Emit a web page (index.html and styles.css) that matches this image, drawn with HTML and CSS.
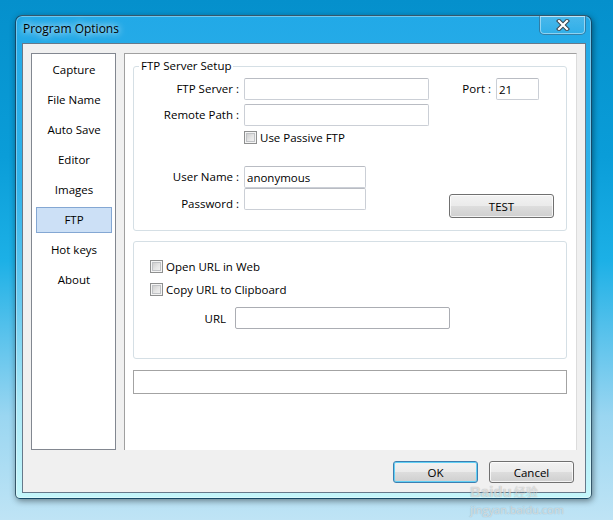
FILE: index.html
```html
<!DOCTYPE html>
<html>
<head>
<meta charset="utf-8">
<title>Program Options</title>
<link rel="stylesheet" href="styles.css">
</head>
<body>
<div class="desktop">
  <div class="window">
    <div class="titlebar">
      <span class="title">Program Options</span>
      <button class="close" aria-label="Close">
        <svg width="14" height="12" viewBox="0 0 14 12">
          <path d="M3 2 L11 10 M11 2 L3 10" stroke="#3b4650" stroke-width="4.2" stroke-linecap="square" fill="none"/>
          <path d="M3 2 L11 10 M11 2 L3 10" stroke="#ffffff" stroke-width="2.2" stroke-linecap="square" fill="none"/>
        </svg>
      </button>
    </div>
    <div class="client">
      <div class="main">
        <ul class="nav">
          <li>Capture</li>
          <li>File Name</li>
          <li>Auto Save</li>
          <li>Editor</li>
          <li>Images</li>
          <li class="active">FTP</li>
          <li>Hot keys</li>
          <li>About</li>
        </ul>
        <div class="panel">
          <fieldset class="group">
            <legend>FTP Server Setup</legend>
            <div class="ftp-grid">
              <label class="lbl row1">FTP Server :</label>
              <input class="txt row1 col2" type="text">
              <label class="lbl row1 col3">Port :</label>
              <input class="txt row1 col4" type="text" value="21">
              <label class="lbl row2 bottom">Remote Path :</label>
              <input class="txt row2 col2 bottom" type="text">
              <div class="chk-line row3 wide"><span class="check"></span>Use Passive FTP</div>
              <label class="lbl row5">User Name :</label>
              <input class="txt short row5 col2" type="text" value="anonymous">
              <label class="lbl row6 pw">Password :</label>
              <input class="txt short row6 col2 pw" type="password">
              <button class="btn test">TEST</button>
            </div>
          </fieldset>
          <div class="url-group">
            <div class="chk-line"><span class="check"></span>Open URL in Web</div>
            <div class="chk-line"><span class="check"></span>Copy URL to Clipboard</div>
            <div class="url-row">
              <label class="url-lbl">URL</label>
              <input class="txt url" type="text">
            </div>
          </div>
          <div class="status-box"></div>
        </div>
      </div>
      <div class="buttons">
        <button class="btn default">OK</button>
        <button class="btn">Cancel</button>
      </div>
    </div>
  </div>
  <div class="watermark">
    <div class="wm-brand"><span class="wm-en">Baidu</span><span class="wm-cn">经验</span></div>
    <div class="wm-url">jingyan.baidu.com</div>
  </div>
</div>
</body>
</html>
```
FILE: styles.css
```css
html, body {
  margin: 0;
  padding: 0;
}

body {
  width: 613px;
  height: 520px;
  overflow: hidden;
  font-family: "Open Sans", "Noto Sans", sans-serif;
  font-size: 11.5px;
  color: #000;
}

.desktop {
  position: relative;
  width: 613px;
  height: 520px;
  background: linear-gradient(180deg, #0590cc 0%, #0a9dd8 30%, #1cb0e6 50%, #5cc3ec 65%, #9ad6f1 80%, #bfe4f5 100%);
}

.window {
  position: absolute;
  left: 15px;
  top: 15px;
  width: 577px;
  height: 484px;
  box-sizing: border-box;
  border: 1px solid rgba(18, 48, 70, 0.8);
  border-radius: 7px 7px 5px 5px;
  background: linear-gradient(180deg, #22a9e7 0%, #30b2ea 35%, #6ccbf0 60%, #a9e8f7 80%, #c4f6fb 100%);
  box-shadow: inset 0 0 0 1px rgba(255, 255, 255, 0.35), 1px 2px 6px rgba(0, 0, 0, 0.45);
  padding: 0 5px 5px 6px;
  display: flex;
  flex-direction: column;
}

.titlebar {
  height: 27px;
  display: flex;
  justify-content: space-between;
  align-items: flex-start;
}

.title {
  margin-left: 1px;
  margin-top: 4px;
  line-height: 18px;
  font-size: 12px;
  text-shadow: 0 0 6px rgba(255, 255, 255, 0.9), 0 0 10px rgba(255, 255, 255, 0.7);
}

.close {
  width: 47px;
  height: 19px;
  margin: 0;
  padding: 0;
  box-sizing: border-box;
  border: 1px solid rgba(40, 80, 110, 0.55);
  border-top: none;
  border-radius: 0 0 5px 5px;
  background: linear-gradient(180deg, rgba(255, 255, 255, 0.18), rgba(255, 255, 255, 0.06));
  box-shadow: inset 0 0 0 1px rgba(255, 255, 255, 0.45);
  display: flex;
  align-items: center;
  justify-content: center;
}

.close svg {
  display: block;
  margin-top: -1px;
}

.client {
  width: 564px;
  height: 450px;
  box-sizing: border-box;
  border: 1px solid #66798a;
  background: #f0f0f0;
  padding: 9px 8px 9px 8px;
  display: flex;
  flex-direction: column;
}

.main {
  display: flex;
  gap: 8px;
  height: 397px;
}

.nav {
  width: 85px;
  box-sizing: border-box;
  border: 1px solid #828790;
  background: #fff;
  margin: 0;
  padding: 3px 0 0 0;
  list-style: none;
}

.nav li {
  height: 26px;
  box-sizing: border-box;
  border: 1px solid transparent;
  margin: 0 3px 4px 4px;
  line-height: 24px;
  text-align: center;
}

.nav li.active {
  background: #cce0f6;
  border-color: #84a7d3;
}

.panel {
  width: 453px;
  box-sizing: border-box;
  border-top: 1px solid #a0a0a0;
  border-left: 1px solid #a0a0a0;
  border-right: 1px solid #dcdcdc;
  background: #fff;
  padding: 4px 9px 0 8px;
}

.group {
  margin: 0;
  padding: 4px 0 12px 0;
  border: 1px solid #d5dfe5;
  border-radius: 3px;
  min-width: 0;
}

.group legend {
  padding: 0 2px;
  margin-left: 5px;
  line-height: 16px;
}

.ftp-grid {
  display: grid;
  grid-template-columns: 105px 185px 57px 43px;
  grid-template-rows: 22px 26px 26px 14px 22px 30px;
  column-gap: 5px;
}

.lbl {
  grid-column: 1;
  text-align: right;
  line-height: 22px;
  white-space: nowrap;
}

.row1 { grid-row: 1; }
.row2 { grid-row: 2; }
.row3 { grid-row: 3; }
.row5 { grid-row: 5; }
.row6 { grid-row: 6; }
.col2 { grid-column: 2; }
.col3 { grid-column: 3; }
.col4 { grid-column: 4; }
.bottom { align-self: end; }
.wide { grid-column: 2 / 5; }

.pw {
  align-self: start;
  margin-top: 5px;
}

.txt {
  box-sizing: border-box;
  height: 22px;
  margin: 0;
  padding: 0 2px;
  border: 1px solid #cbcfd6;
  border-top-color: #b9bcc3;
  border-radius: 2px;
  background: #fff;
  font: inherit;
  color: #000;
  outline: none;
}

.short {
  width: 122px;
}

.chk-line {
  display: flex;
  align-items: center;
  height: 22px;
  white-space: nowrap;
}

.check {
  display: inline-block;
  width: 13px;
  height: 13px;
  box-sizing: border-box;
  border: 1px solid #8e8f8f;
  background: linear-gradient(135deg, #c4c4c4 0%, #e6e6e6 55%, #f6f6f6 100%);
  box-shadow: inset 0 0 0 1px #f4f4f4, inset 0 0 0 2px #c0c2c5;
  margin-right: 3px;
}

.btn {
  box-sizing: border-box;
  width: 85px;
  height: 22px;
  margin: 0;
  padding: 0;
  border: 1px solid #707070;
  border-radius: 3px;
  background: linear-gradient(180deg, #f2f2f2 0%, #ebebeb 48%, #dddddd 52%, #cfcfcf 100%);
  box-shadow: inset 0 0 0 1px rgba(255, 255, 255, 0.75);
  font: inherit;
  color: #000;
}

.btn.default {
  border-color: #3c7fb1;
  box-shadow: inset 0 0 0 1px #62d0f5;
}

.test {
  grid-row: 6;
  grid-column: 3 / 5;
  align-self: start;
  width: 105px;
  height: 24px;
  margin-top: 6px;
  margin-left: 15px;
}

.url-group {
  margin-top: 10px;
  height: 118px;
  box-sizing: border-box;
  border: 1px solid #d5dfe5;
  border-radius: 3px;
  padding: 13px 16px 0 16px;
}

.url-group .chk-line + .chk-line {
  margin-top: 1px;
}

.url-row {
  display: flex;
  align-items: center;
  margin-top: 7px;
}

.url-lbl {
  width: 76px;
  text-align: right;
  margin-right: 9px;
}

.url {
  width: 215px;
  border-color: #abadb3;
}

.status-box {
  margin-top: 11px;
  height: 24px;
  box-sizing: border-box;
  border: 1px solid #a3a3a3;
  background: #fff;
}

.buttons {
  display: flex;
  justify-content: flex-end;
  gap: 11px;
  margin-top: 11px;
  padding-right: 3px;
}

.watermark {
  position: absolute;
  left: 470px;
  top: 484px;
  width: 120px;
  color: rgba(255, 255, 255, 0.6);
  text-shadow: 0 0 1px rgba(60, 60, 60, 0.45);
  pointer-events: none;
}

.wm-brand {
  display: flex;
  align-items: center;
  height: 16px;
  white-space: nowrap;
}

.wm-en {
  font-family: "Liberation Sans", Arial, sans-serif;
  font-weight: bold;
  font-size: 15px;
  line-height: 16px;
}

.wm-cn {
  font-family: "Noto Sans CJK SC", sans-serif;
  font-size: 12px;
  line-height: 16px;
  margin-left: 2px;
}

.wm-url {
  font-family: "Open Sans", sans-serif;
  font-size: 11px;
  line-height: 14px;
  margin-top: 3px;
  white-space: nowrap;
}
```
